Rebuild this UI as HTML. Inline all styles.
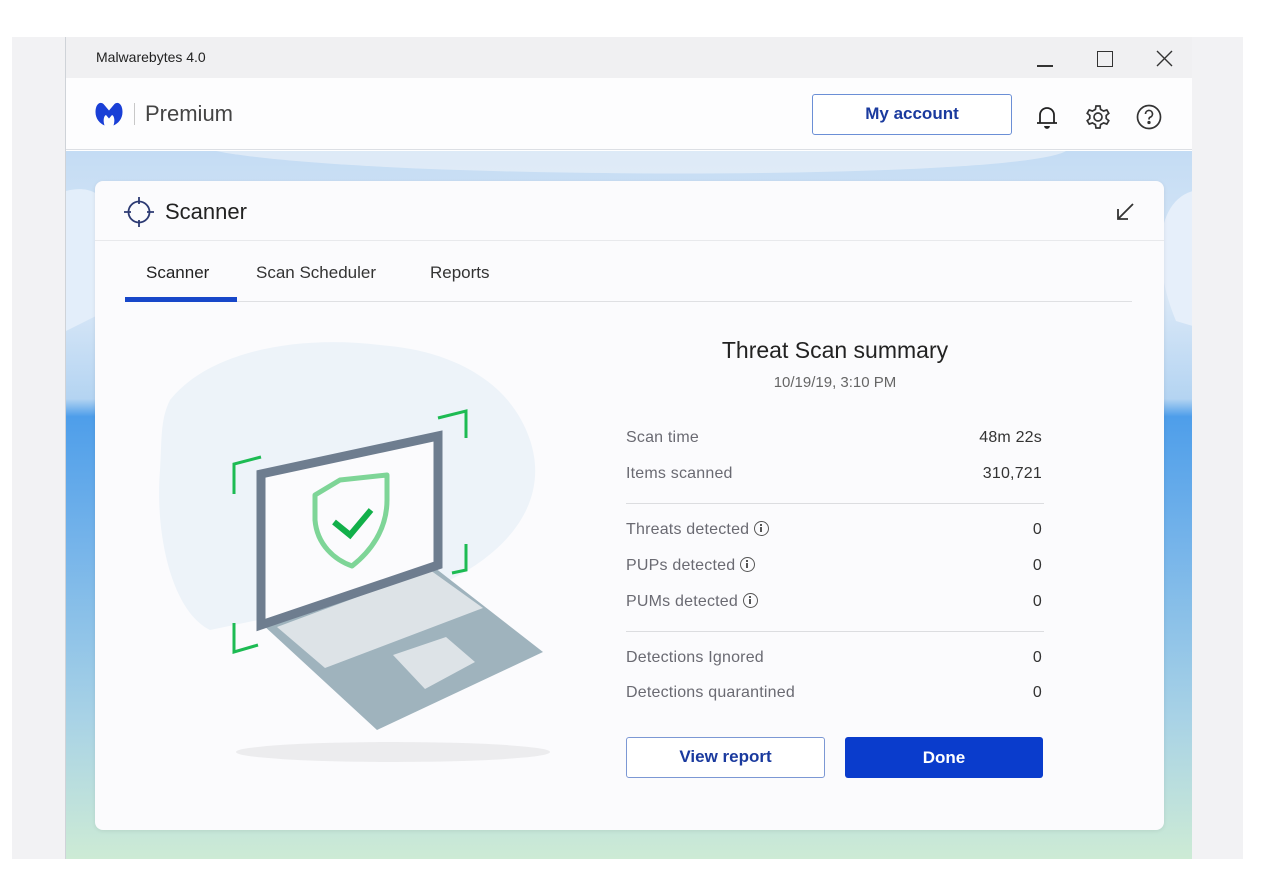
<!DOCTYPE html>
<html><head><meta charset="utf-8">
<style>
*{margin:0;padding:0;box-sizing:border-box}
body{width:1274px;height:876px;background:#fff;position:relative;overflow:hidden;font-family:"Liberation Sans",sans-serif;color:#333}
.abs{position:absolute}
.row{position:absolute;left:626px;width:418px;font-size:16px;color:#6a6a72;letter-spacing:0.2px}
.row span.v{position:absolute;right:2px;top:0;color:#333}
.info{display:inline-block;width:15px;height:15px;border:1.5px solid #555;border-radius:50%;vertical-align:-2px;margin-left:5px;position:relative}
.info:after{content:"";position:absolute;left:5px;top:5px;width:2px;height:5px;background:#555}
.info:before{content:"";position:absolute;left:5px;top:2px;width:2px;height:2px;background:#555}
</style></head><body>
<div class="abs" style="left:12px;top:37px;width:1231px;height:822px;background:#f2f2f4"></div>
<div class="abs" style="left:65px;top:37px;width:1127px;height:822px;background:#fff;border-left:1px solid #cfd3d8;overflow:hidden">
  <div class="abs" style="left:0;top:0;width:1127px;height:41px;background:#f0f0f2"></div>
  <div class="abs" style="left:30px;top:12px;font-size:14px;color:#222">Malwarebytes 4.0</div>
  <div class="abs" style="left:971px;top:28px;width:16px;height:1.5px;background:#333"></div>
  <div class="abs" style="left:1031px;top:14px;width:16px;height:16px;border:1.3px solid #333"></div>
  <svg class="abs" style="left:1090px;top:13px" width="17" height="17" viewBox="0 0 17 17" stroke="#333" stroke-width="1.4"><path d="M1 1 L16 16 M16 1 L1 16"/></svg>
  <div class="abs" style="left:0;top:41px;width:1127px;height:72px;background:#fdfdfe;border-bottom:1px solid #dcdfe4"></div>
  <svg class="abs" style="left:28px;top:64px" width="30" height="26" viewBox="0 0 30 26">
    <path d="M1.5 11 C1.5 3 6 0 9.5 3 L15 9.5 L20.5 3 C24 0 28.5 3 28.5 11 C28.5 18 24 22.5 19.5 24.5 C21 20 20.5 15 18 14 L15 17.5 L12 14 C9.5 15 9 20 10.5 24.5 C6 22.5 1.5 18 1.5 11Z" fill="#1a3fd6"/>
  </svg>
  <div class="abs" style="left:68px;top:66px;width:1px;height:22px;background:#c8c8c8"></div>
  <div class="abs" style="left:79px;top:64px;font-size:22px;color:#444">Premium</div>
  <div class="abs" style="left:746px;top:57px;width:200px;height:41px;border:1.5px solid #6b8fd6;border-radius:3px;color:#1a3a9e;font-weight:bold;font-size:17px;text-align:center;line-height:38px;background:#fff">My account</div>
  <svg class="abs" style="left:968px;top:67px" width="26" height="26" viewBox="0 0 26 26" fill="none" stroke="#222" stroke-width="1.8">
    <path d="M6 19 V11 A7 7 0 0 1 20 11 V19 Z M3 19 H23"/><path d="M11 22 A2 2 0 0 0 15 22" fill="#222"/>
  </svg>
  <svg class="abs" style="left:1019px;top:67px" width="26" height="26" viewBox="0 0 26 26" fill="none" stroke="#333" stroke-width="1.7">
    <path d="M11 2 H15 L15.6 5.4 L18.6 7.1 L21.8 5.9 L23.8 9.3 L21.2 11.5 V14.5 L23.8 16.7 L21.8 20.1 L18.6 18.9 L15.6 20.6 L15 24 H11 L10.4 20.6 L7.4 18.9 L4.2 20.1 L2.2 16.7 L4.8 14.5 V11.5 L2.2 9.3 L4.2 5.9 L7.4 7.1 L10.4 5.4 Z"/><circle cx="13" cy="13" r="4"/>
  </svg>
  <svg class="abs" style="left:1070px;top:67px" width="26" height="26" viewBox="0 0 26 26" fill="none" stroke="#333" stroke-width="1.7">
    <circle cx="13" cy="13" r="11.5"/><path d="M9.5 10 A3.5 3.5 0 1 1 14 13.3 C13.2 13.7 13 14.3 13 15.5"/><circle cx="13" cy="18.5" r="0.8" fill="#333"/>
  </svg>
  <div class="abs" style="left:0;top:114px;width:1127px;height:708px;background:linear-gradient(180deg,#c4dcf4 0%,#dce9f7 20%,#b4d4f2 35%,#4e9eea 37.5%,#74b3ea 55%,#a8d2e6 80%,#cdebd5 100%)"></div>
  <svg class="abs" style="left:0;top:114px" width="1127" height="270" viewBox="0 0 1127 270">
    <path d="M0 40 C40 30 60 60 40 160 L0 180Z" fill="#e3eefa"/>
    <path d="M1127 40 C1090 50 1085 110 1110 170 L1127 175Z" fill="#e6effa"/>
    <path d="M150 0 H1000 C950 30 300 30 150 0Z" fill="#eef3f9" opacity="0.6"/>
  </svg>
</div>
<div class="abs" style="left:95px;top:181px;width:1069px;height:649px;background:#fbfbfd;border-radius:8px;box-shadow:0 1px 4px rgba(0,0,0,0.08)"></div>
<div class="abs" style="left:95px;top:240px;width:1069px;height:1px;background:#e8e9ec"></div>
<svg class="abs" style="left:122px;top:196px" width="34" height="32" viewBox="0 0 34 32" fill="none" stroke="#2c3a73" stroke-width="1.8">
  <circle cx="17" cy="16" r="10.5"/><path d="M17 1 V8 M17 24 V31 M2 16 H9 M25 16 H32"/>
</svg>
<div class="abs" style="left:165px;top:199px;font-size:22px;color:#222">Scanner</div>
<svg class="abs" style="left:1114px;top:201px" width="22" height="22" viewBox="0 0 22 22" fill="none" stroke="#333" stroke-width="1.8">
  <path d="M19 3 L4 18 M4 8 V18 H14"/>
</svg>
<div class="abs" style="left:146px;top:263px;font-size:17px;color:#222">Scanner</div>
<div class="abs" style="left:256px;top:263px;font-size:17px;color:#333">Scan Scheduler</div>
<div class="abs" style="left:430px;top:263px;font-size:17px;color:#333">Reports</div>
<div class="abs" style="left:125px;top:301px;width:1007px;height:1px;background:#dfe0e3"></div>
<div class="abs" style="left:125px;top:297px;width:112px;height:5px;background:#1747c9"></div>
<svg class="abs" style="left:150px;top:330px" width="420" height="440" viewBox="0 0 420 440">
  <path d="M20 70 C60 20 150 5 230 15 C300 20 360 50 380 110 C400 170 360 220 300 250 L60 300 C20 280 5 200 10 140 C12 110 10 90 20 70Z" fill="#edf3f9"/>
  <ellipse cx="243" cy="422" rx="157" ry="10" fill="#ececee"/>
  <path d="M112 294 L280 234 L393 322 L227 400Z" fill="#9fb3bd"/>
  <path d="M127 297 L280 240 L333 278 L175 338Z" fill="#dde3e7"/>
  <path d="M243 325 L296 307 L325 332 L275 359Z" fill="#dde3e7"/>
  <path d="M111 144 L288 106 L288 235 L111 295Z" fill="#fbfbfd" stroke="#6e7d8f" stroke-width="9" stroke-linejoin="miter"/>
  <path d="M165 165 L190 150 L237 145 L237 170 C237 200 220 222 202 236 C185 230 167 215 165 190Z" fill="none" stroke="#7ed597" stroke-width="5" stroke-linejoin="round"/>
  <path d="M184 192 L200 205 L221 180" fill="none" stroke="#12b04a" stroke-width="6"/>
  <path d="M111 127 L84 134 L84 164 M288 88 L316 81 L316 108 M316 214 L316 240 L302 243 M84 293 L84 322 L108 315" fill="none" stroke="#1dbb53" stroke-width="3"/>
</svg>
<div class="abs" style="left:626px;top:337px;width:418px;text-align:center;font-size:23px;color:#222">Threat Scan summary</div>
<div class="abs" style="left:626px;top:374px;width:418px;text-align:center;font-size:15px;color:#666">10/19/19, 3:10 PM</div>
<div class="row" style="top:429px">Scan time<span class="v">48m 22s</span></div>
<div class="row" style="top:465px">Items scanned<span class="v">310,721</span></div>
<div class="abs" style="left:626px;top:503px;width:418px;height:1px;background:#dcdde0"></div>
<div class="row" style="top:521px">Threats detected<span class="info"></span><span class="v">0</span></div>
<div class="row" style="top:557px">PUPs detected<span class="info"></span><span class="v">0</span></div>
<div class="row" style="top:593px">PUMs detected<span class="info"></span><span class="v">0</span></div>
<div class="abs" style="left:626px;top:631px;width:418px;height:1px;background:#dcdde0"></div>
<div class="row" style="top:649px">Detections Ignored<span class="v">0</span></div>
<div class="row" style="top:684px">Detections quarantined<span class="v">0</span></div>
<div class="abs" style="left:626px;top:737px;width:199px;height:41px;border:1.5px solid #7c98d4;border-radius:3px;background:#fff;text-align:center;line-height:38px;font-size:17px;font-weight:bold;color:#1a3a9e">View report</div>
<div class="abs" style="left:845px;top:737px;width:198px;height:41px;border-radius:3px;background:#0a3ccc;text-align:center;line-height:41px;font-size:17px;font-weight:bold;color:#fff">Done</div>
</body></html>
